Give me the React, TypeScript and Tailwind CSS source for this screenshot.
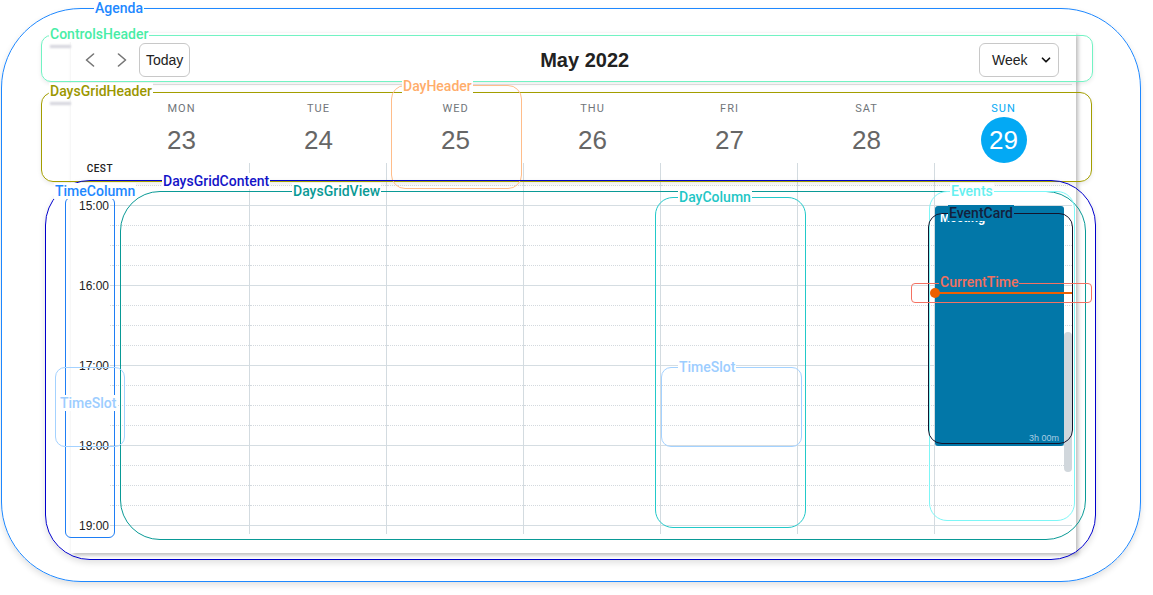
import { ChevronDown } from 'lucide-react'

const days = [
  { name: 'MON', num: 23 },
  { name: 'TUE', num: 24 },
  { name: 'WED', num: 25 },
  { name: 'THU', num: 26 },
  { name: 'FRI', num: 27 },
  { name: 'SAT', num: 28 },
  { name: 'SUN', num: 29, today: true },
]

const hours = ['15:00', '16:00', '17:00', '18:00', '19:00']

// annotation overlays: box + tag, classes written out in full
const notes = [
  { t: 'Agenda', box: 'left-[1px] top-[8px] h-[574px] w-[1140px] rounded-[80px] border-[#1e88ff] shadow-[0_3px_6px_rgba(0,0,0,0.12)]', tag: 'left-[94px] top-[0px] text-[#1e88ff] bg-white' },
  { t: 'ControlsHeader', box: 'left-[41px] top-[35px] h-[47px] w-[1052px] rounded-[10px] border-[#72f3c3] shadow-[0_2px_4px_rgba(0,0,0,0.08)]', tag: 'left-[49px] top-[26px] text-[#48eda6] bg-white' },
  { t: 'DaysGridHeader', box: 'left-[41px] top-[92px] h-[90px] w-[1051px] rounded-[12px] border-[#a39e00] shadow-[0_2px_4px_rgba(0,0,0,0.08)]', tag: 'left-[49px] top-[83px] text-[#9b9700] bg-white' },
  { t: 'DayHeader', box: 'left-[391px] top-[85px] h-[104px] w-[131px] rounded-[14px] border-[#ffbd8a]', tag: 'left-[402px] top-[78px] text-[#ffad6b] bg-white' },
  { t: 'DaysGridContent', box: 'left-[45px] top-[180px] h-[380px] w-[1051px] rounded-[45px] border-[#0000cc] shadow-[0_3px_6px_rgba(0,0,0,0.12)]', tag: 'left-[162px] top-[173px] text-[#1414c8] bg-white' },
  { t: 'TimeColumn', box: 'left-[65px] top-[197px] h-[341px] w-[50px] rounded-[6px] border-[#1e7ef5]', tag: 'left-[54px] top-[183px] text-[#1e88ff] bg-white' },
  { t: 'DaysGridView', box: 'left-[120px] top-[191px] h-[349px] w-[966px] rounded-[40px] border-[#0a9a96]', tag: 'left-[292px] top-[183px] text-[#0a9a96] bg-white' },
  { t: 'DayColumn', box: 'left-[655px] top-[197px] h-[331px] w-[151px] rounded-[18px] border-[#22c9c9]', tag: 'left-[678px] top-[189px] text-[#1fc6c6] bg-white' },
  { t: 'TimeSlot', box: 'left-[661px] top-[367px] h-[80px] w-[141px] rounded-[10px] border-[#a4d2ff]', tag: 'left-[678px] top-[359px] text-[#9ccdff] bg-white' },
  { t: 'TimeSlot', box: 'left-[55px] top-[367px] h-[80px] w-[70px] rounded-[10px] border-[#a4d2ff]', tag: 'left-[59px] top-[395px] text-[#9ccdff] bg-white' },
  { t: 'Events', box: 'left-[929px] top-[191px] h-[330px] w-[146px] rounded-[18px] border-[#7df7f7]', tag: 'left-[950px] top-[183px] text-[#66f0f0] bg-white' },
  { t: 'EventCard', box: 'left-[928px] top-[213px] h-[231px] w-[145px] rounded-[14px] border-[#14142c]', tag: 'left-[948px] top-[205px] text-[#14213d] bg-[#0277a8]' },
  { t: 'CurrentTime', box: 'left-[911px] top-[283px] h-[20px] w-[181px] rounded-[4px] border-[#f47262]', tag: 'left-[939px] top-[274px] text-[#f2705f] bg-[#0277a8]' },
]

function Chevron({ flip }: { flip?: boolean }) {
  return (
    <svg width="10" height="14" viewBox="0 0 10 14" fill="none" className={flip ? 'rotate-180' : ''}>
      <path d="M8.5 1 L1.5 7 L8.5 13" stroke="#757575" strokeWidth="1.6" strokeLinecap="round" strokeLinejoin="round" />
    </svg>
  )
}

// 4px top remainder, 17 quarter slots, 8px tail
function Slots() {
  return (
    <>
      {Array.from({ length: 19 }).map((_, i) => {
        if (i === 18) return <div key={i} className="h-[8px]" />
        if (i === 0) return <div key={i} className="h-[4px] border-b border-dotted border-[#d3d9de]" />
        return (
          <div
            key={i}
            className={
              i % 4 === 1
                ? 'h-[20px] border-b border-solid border-[#d5dde2]'
                : 'h-[20px] border-b border-dotted border-[#d3d9de]'
            }
          />
        )
      })}
    </>
  )
}

export default function App() {
  return (
    <div className="relative h-[595px] w-[1153px] overflow-hidden bg-white pl-[71px] pt-[33px] font-['Liberation_Sans',Arial,sans-serif]">
      {/* Calendar card */}
      <div className="h-[520px] w-[1005px] bg-white pr-[4px] shadow-[2px_2px_4px_rgba(0,0,0,0.28)]">
        {/* Controls */}
        <div className="flex h-[52px] items-center justify-between border-b border-[#e2e2e2] pl-[3px] pr-[13px] pt-[3px]">
          <div className="flex items-center">
            <button className="flex h-8 w-8 items-center justify-center">
              <Chevron />
            </button>
            <button className="flex h-8 w-8 items-center justify-center">
              <Chevron flip />
            </button>
            <button className="ml-px h-[34px] rounded-[6px] border border-[#c8c8c8] px-[6px] text-[14px] text-[#222]">
              Today
            </button>
          </div>
          <div className="text-[20px] font-bold text-[#222]">May 2022</div>
          <div className="flex h-[34px] w-[80px] items-center justify-between rounded-[6px] border border-[#c8c8c8] pl-[12px] pr-[5px] text-[14px] text-[#222]">
            <span>Week</span>
            <ChevronDown size={14} strokeWidth={3} color="#111" />
          </div>
        </div>

        {/* Days header */}
        <div className="flex h-[97px]">
          <div className="w-[42px] pt-[78px] text-right font-['Roboto',sans-serif] text-[10px] font-medium leading-[12px] tracking-[0.5px] text-[#222]">
            CEST
          </div>
          {days.map((d, i) => (
            <div key={d.name} className="flex w-[137px] flex-col items-center">
              <div
                className={`pt-[17px] font-['Roboto',sans-serif] text-[11px] leading-[14px] tracking-[1px] ${
                  d.today ? 'text-[#03a9f4]' : 'text-[#70757a]'
                }`}
              >
                {d.name}
              </div>
              <div
                className={`mt-px flex h-[46px] w-[46px] items-center justify-center rounded-full text-[26px] ${
                  d.today ? 'bg-[#03a9f4] text-white' : 'text-[#666]'
                }`}
              >
                {d.num}
              </div>
              <div className={`w-full flex-1 ${i < 6 ? 'border-r border-[#d3dbe0]' : ''}`} />
            </div>
          ))}
        </div>

        {/* Grid content */}
        <div className="flex h-[352px] overflow-hidden">
          <div className="flex w-[39px] flex-col items-end gap-[64px] pr-px pt-[16px] text-[12px] leading-[16px] text-[#222]">
            {hours.map((h) => (
              <span key={h}>{h}</span>
            ))}
          </div>
          <div className="flex w-[3px] flex-col">
            <Slots />
          </div>
          {days.map((d, i) => (
            <div
              key={d.name}
              className={`relative flex w-[137px] flex-col ${i < 6 ? 'border-r border-[#d3dbe0]' : ''}`}
            >
              <Slots />
              {d.today && (
                <>
                  <div className="absolute left-0 top-[24px] flex h-[240px] w-[129px] flex-col justify-between rounded-[3px] bg-[#0277a8] px-[5px] pb-[3px] pt-[5px]">
                    <span className="text-[12px] font-bold leading-[14px] text-white">Meeting</span>
                    <span className="self-end text-[9px] leading-[10px] text-[#a9cde3]">3h 00m</span>
                  </div>
                  <div className="absolute left-0 right-0 top-[110px] h-[2px] bg-[#ee6000]">
                    <div className="absolute -left-[5px] -top-[4px] h-[10px] w-[10px] rounded-full bg-[#ee6000]" />
                  </div>
                  <div className="absolute left-[129px] top-[150px] h-[140px] w-[8px] rounded-[4px] bg-[#d1d7dc]" />
                </>
              )}
            </div>
          ))}
        </div>
      </div>

      {/* label shadows peeking out left of the card */}
      <div className="absolute left-[50px] top-[45px] h-[3px] w-[21px] bg-[#d4d4dc] blur-[1px]" />
      <div className="absolute left-[50px] top-[102px] h-[3px] w-[21px] bg-[#d4d4dc] blur-[1px]" />

      {/* Annotation boxes */}
      {notes.map((n, i) => (
        <div key={'b' + i} className={`pointer-events-none absolute border ${n.box}`} />
      ))}
      {notes.map((n, i) => (
        <span
          key={'t' + i}
          className={`absolute px-px font-['Roboto',sans-serif] text-[14px] font-medium leading-[16px] ${n.tag}`}
        >
          {n.t}
        </span>
      ))}
    </div>
  )
}
